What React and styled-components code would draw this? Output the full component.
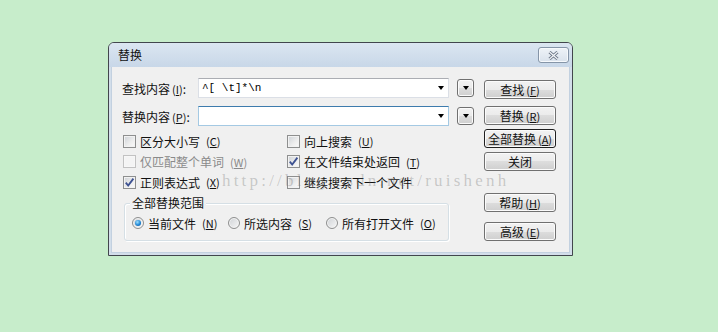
import React from 'react'
import styled, { createGlobalStyle } from 'styled-components'

const GlobalStyle = createGlobalStyle`
  html, body { margin: 0; padding: 0; }
  body {
    background: #c7edcb;
    font-family: "Noto Sans CJK SC", "Noto Sans", sans-serif;
    font-size: 12px;
    color: #111;
  }
`

const Page = styled.div`
  position: relative;
  width: 718px;
  height: 332px;
  box-sizing: border-box;
  padding: 42px 0 0 108px;
`

const Dialog = styled.div`
  width: 465px;
  height: 214px;
  box-sizing: border-box;
  border: 1px solid #42464d;
  border-radius: 6px 6px 0 0;
  background: #d3deea;
  display: flex;
  flex-direction: column;
`

const TitleBar = styled.div`
  height: 24px;
  flex: none;
  display: flex;
  align-items: center;
  justify-content: space-between;
  padding: 0 3px 0 9px;
  background: linear-gradient(#dbe6f1, #c8d7e8);
  border-radius: 5px 5px 0 0;
  line-height: 14px;
`

const CloseBox = styled.div`
  width: 31px;
  height: 16px;
  box-sizing: border-box;
  border: 1px solid #8595a8;
  border-radius: 3px;
  background: linear-gradient(#eef3f8, #d9e2ec);
  box-shadow: inset 0 0 0 1px #f6f9fc;
  display: flex;
  align-items: center;
  justify-content: center;
`

const Client = styled.div`
  flex: 1;
  margin: 0 2px 2px;
  background: #f0f0f0;
  border: 1px solid #c3d1e0;
  border-top: none;
  display: flex;
  padding: 11px 0 0 10px;
`

const LeftPanel = styled.div`
  width: 352px;
  display: flex;
  flex-direction: column;
`

const FieldRow = styled.div`
  display: flex;
  align-items: center;
  height: 20px;
  margin-top: ${p => p.$top || 0}px;
`

const FieldLabel = styled.div`
  width: 76px;
  white-space: nowrap;
`

const Combo = styled.div`
  width: 251px;
  height: 20px;
  box-sizing: border-box;
  display: flex;
  align-items: center;
  padding: 0 4px 0 3px;
  background: #fff;
  border: 1px solid ${p => (p.$focus ? '#a4c9e3' : '#dbdfe6')};
  border-top-color: ${p => (p.$focus ? '#3d7bad' : '#abadb3')};
`

const ComboText = styled.div`
  flex: 1;
  font-family: "Liberation Mono", monospace;
  font-size: 11px;
  white-space: pre;
  color: #000;
`

const Arrow = styled.span`
  width: 0;
  height: 0;
  border-left: 3.5px solid transparent;
  border-right: 3.5px solid transparent;
  border-top: 4px solid #000;
`

const HistoryButton = styled.div`
  width: 17px;
  height: 18px;
  margin-left: 8px;
  box-sizing: border-box;
  border: 1px solid #707070;
  border-radius: 3px;
  background: linear-gradient(#f2f2f2 0%, #ebebeb 50%, #dddddd 50%, #cfcfcf 100%);
  box-shadow: inset 0 0 0 1px #fbfbfb;
  display: flex;
  align-items: center;
  justify-content: center;
`

const OptionGrid = styled.div`
  display: grid;
  grid-template-columns: 164px 1fr;
  grid-auto-rows: 20.5px;
  margin-top: 5px;
  padding-left: 1px;
`

const Option = styled.label`
  display: flex;
  align-items: center;
  gap: 4px;
  white-space: nowrap;
  color: ${p => (p.$disabled ? '#8a8a8a' : '#111')};
`

const Box = styled.span`
  width: 13px;
  height: 13px;
  box-sizing: border-box;
  flex: none;
  border: 1px solid ${p => (p.$disabled ? '#c2c2c2' : '#8e8f8f')};
  background: ${p =>
    p.$disabled ? '#f4f4f4' : 'linear-gradient(135deg, #cdd1d6 0%, #eeeeee 60%, #fafafa 100%)'};
  box-shadow: inset 0 0 0 1px ${p => (p.$disabled ? '#f7f7f7' : '#f2f2f2')};
  display: flex;
  align-items: center;
  justify-content: center;
`

const GroupBox = styled.div`
  position: relative;
  width: 325px;
  height: 38px;
  box-sizing: border-box;
  margin: 10px 0 0 2px;
  border: 1px solid #d5dfe5;
  border-radius: 3px;
  box-shadow: inset 1px 1px #fff, 1px 1px #fff;
  display: grid;
  grid-template-columns: 96px 98px auto;
  align-items: center;
  padding: 3px 0 0 7px;
`

const GroupTitle = styled.span`
  position: absolute;
  left: 5px;
  top: -9px;
  padding: 0 2px;
  background: #f0f0f0;
  line-height: 16px;
`

const Radio = styled.span`
  width: 12px;
  height: 12px;
  box-sizing: border-box;
  flex: none;
  border-radius: 50%;
  border: 1px solid #8e8f8f;
  background: linear-gradient(135deg, #cfd2d6, #f7f7f7);
  box-shadow: inset 0 0 0 1px #f4f4f4;
  display: flex;
  align-items: center;
  justify-content: center;
  &::after {
    content: '';
    display: ${p => (p.$on ? 'block' : 'none')};
    width: 6px;
    height: 6px;
    border-radius: 50%;
    background: radial-gradient(circle at 40% 35%, #9fe0ff 0%, #1f86d4 55%, #0b4f98 100%);
  }
`

const ButtonColumn = styled.div`
  margin-left: 10px;
  padding-top: 2px;
  display: flex;
  flex-direction: column;
`

const Button = styled.div`
  width: 72px;
  height: 19px;
  box-sizing: border-box;
  margin-top: ${p => p.$top || 0}px;
  border: 1px solid ${p => (p.$default ? '#1f1f1f' : '#707070')};
  border-radius: 3px;
  background: linear-gradient(#f2f2f2 0%, #ebebeb 50%, #dddddd 50%, #cfcfcf 100%);
  box-shadow: inset 0 0 0 1px #fbfbfb;
  display: flex;
  align-items: center;
  justify-content: center;
  line-height: 14px;
  white-space: nowrap;
  color: #111;
`

const Key = styled.span`
  margin-left: 2px;
  font-size: 11px;
  u { text-decoration: underline; text-underline-offset: 1px; }
`

const Watermark = styled.div`
  position: absolute;
  left: 222px;
  top: 171px;
  font-family: "Liberation Serif", serif;
  font-size: 17px;
  letter-spacing: 3.2px;
  line-height: 20px;
  color: rgba(110, 110, 110, 0.32);
  pointer-events: none;
  white-space: nowrap;
`

const Accel = ({ k }) => (
  <Key>
    (<u>{k}</u>)
  </Key>
)

const Check = () => (
  <svg width="11" height="11" viewBox="0 0 11 11">
    <path d="M1.8 5.6 L4.2 8.6 L9.4 1.6" fill="none" stroke="#3d5191" strokeWidth="1.8" />
  </svg>
)

const CheckOption = ({ label, k, checked, disabled }) => (
  <Option $disabled={disabled}>
    <Box $disabled={disabled}>{checked && <Check />}</Box>
    {label}
    {k && <Accel k={k} />}
  </Option>
)

const RadioOption = ({ label, k, on }) => (
  <Option>
    <Radio $on={on} />
    {label}
    <Accel k={k} />
  </Option>
)

export default function App() {
  return (
    <Page>
      <GlobalStyle />
      <Dialog>
        <TitleBar>
          <span>替换</span>
          <CloseBox>
            <svg width="11" height="9" viewBox="0 0 11 9">
              <path d="M1.5 1 L9.5 8 M9.5 1 L1.5 8" stroke="#6c7888" strokeWidth="3" />
              <path d="M1.5 1 L9.5 8 M9.5 1 L1.5 8" stroke="#f4f6f9" strokeWidth="1.2" />
            </svg>
          </CloseBox>
        </TitleBar>
        <Client>
          <LeftPanel>
            <FieldRow>
              <FieldLabel>查找内容<Accel k="I" />:</FieldLabel>
              <Combo>
                <ComboText>{'^[ \\t]*\\n'}</ComboText>
                <Arrow />
              </Combo>
              <HistoryButton><Arrow /></HistoryButton>
            </FieldRow>
            <FieldRow $top={8}>
              <FieldLabel>替换内容<Accel k="P" />:</FieldLabel>
              <Combo $focus>
                <ComboText />
                <Arrow />
              </Combo>
              <HistoryButton><Arrow /></HistoryButton>
            </FieldRow>
            <OptionGrid>
              <CheckOption label="区分大小写" k="C" />
              <CheckOption label="向上搜索" k="U" />
              <CheckOption label="仅匹配整个单词" k="W" disabled />
              <CheckOption label="在文件结束处返回" k="T" checked />
              <CheckOption label="正则表达式" k="X" checked />
              <CheckOption label="继续搜索下一个文件" />
            </OptionGrid>
            <GroupBox>
              <GroupTitle>全部替换范围</GroupTitle>
              <RadioOption label="当前文件" k="N" on />
              <RadioOption label="所选内容" k="S" />
              <RadioOption label="所有打开文件" k="O" />
            </GroupBox>
          </LeftPanel>
          <ButtonColumn>
            <Button>查找<Accel k="F" /></Button>
            <Button $top={7}>替换<Accel k="R" /></Button>
            <Button $top={4} $default>全部替换<Accel k="A" /></Button>
            <Button $top={4}>关闭</Button>
            <Button $top={22}>帮助<Accel k="H" /></Button>
            <Button $top={10}>高级<Accel k="E" /></Button>
          </ButtonColumn>
        </Client>
      </Dialog>
      <Watermark>http://blog.csdn.net/ruishenh</Watermark>
    </Page>
  )
}
